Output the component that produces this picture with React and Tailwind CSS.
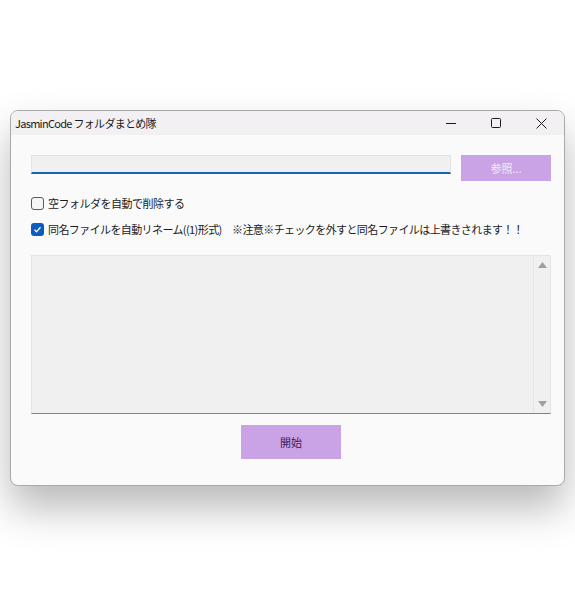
export default function App() {
  const font = { fontFamily: '"Noto Sans CJK JP", "Noto Sans", sans-serif' };
  return (
    <div className="w-[575px] h-[607px] bg-white pt-[110px] pl-[10px]" style={font}>
      <div className="w-[555px] h-[376px] rounded-[8px] border border-[#a9a9a9] bg-[#fafafa] shadow-[0_22px_40px_rgba(0,0,0,0.28)] overflow-hidden flex flex-col">
        <div className="h-[24px] bg-[#f3f0f3] flex items-center">
          <div className="flex-1 pl-[4px] text-[11px] tracking-[-0.7px] text-[#1a1a1a] leading-none whitespace-nowrap">JasminCode フォルダまとめ隊</div>
          <div className="w-[45px] h-full flex items-center justify-center">
            <svg width="10" height="10" viewBox="0 0 10 10"><path d="M0 5.5h10" stroke="#1a1a1a" strokeWidth="1" /></svg>
          </div>
          <div className="w-[45px] h-full flex items-center justify-center">
            <svg width="10" height="10" viewBox="0 0 10 10"><rect x="0.5" y="0.5" width="9" height="9" rx="1" fill="none" stroke="#1a1a1a" strokeWidth="1" /></svg>
          </div>
          <div className="w-[46px] h-full flex items-center justify-center">
            <svg width="11" height="11" viewBox="0 0 11 11"><path d="M0.5 0.5l10 10M10.5 0.5l-10 10" stroke="#1a1a1a" strokeWidth="1" /></svg>
          </div>
        </div>
        <div className="flex-1 flex flex-col pl-[20px] pr-[13px] pt-[20px]">
          <div className="flex items-start gap-[10px]">
            <div className="w-[420px] h-[19px] bg-[#f0f0f0] border border-[#e3e3e3] border-b-2 border-b-[#1464b4]" />
            <div className="w-[90px] h-[26px] bg-[#c9a3e5] flex items-center justify-center text-[11px] text-[#f4ecfa] leading-none">参照...</div>
          </div>
          <div className="mt-[15px] flex items-center h-[14px] text-[11px] tracking-[-0.5px] text-[#1a1a1a] leading-none whitespace-nowrap">
            <div className="w-[13px] h-[13px] rounded-[3px] border border-[#5a5a5a] bg-[#f6f6f6] mr-[4px] shrink-0" />
            <span>空フォルダを自動で削除する</span>
          </div>
          <div className="mt-[12px] flex items-center h-[14px] text-[11px] tracking-[-0.6px] text-[#1a1a1a] leading-none whitespace-nowrap">
            <div className="w-[13px] h-[13px] rounded-[3px] bg-[#0b5cbf] mr-[4px] shrink-0 flex items-center justify-center">
              <svg width="9" height="9" viewBox="0 0 9 9"><path d="M1.5 4.7l2 2 4-4.5" fill="none" stroke="white" strokeWidth="1.3" /></svg>
            </div>
            <span>同名ファイルを自動リネーム((1)形式)　※注意※チェックを外すと同名ファイルは上書きされます！！</span>
          </div>
          <div className="mt-[19px] w-[520px] h-[159px] bg-[#f0f0f0] border border-[#e4e4e4] border-b-[#828282] flex">
            <div className="flex-1" />
            <div className="w-[17px] border-l border-[#e6e6e6] flex flex-col items-center justify-between py-[6px]">
              <svg width="9" height="6" viewBox="0 0 9 6"><path d="M0 6L4.5 0L9 6Z" fill="#a0a0a0" /></svg>
              <svg width="9" height="6" viewBox="0 0 9 6"><path d="M0 0L4.5 6L9 0Z" fill="#a0a0a0" /></svg>
            </div>
          </div>
          <div className="mt-[11px] flex justify-center">
            <div className="w-[100px] h-[34px] bg-[#c9a3e5] flex items-center justify-center text-[11px] text-[#3d1a5a] leading-none">開始</div>
          </div>
        </div>
      </div>
    </div>
  );
}
